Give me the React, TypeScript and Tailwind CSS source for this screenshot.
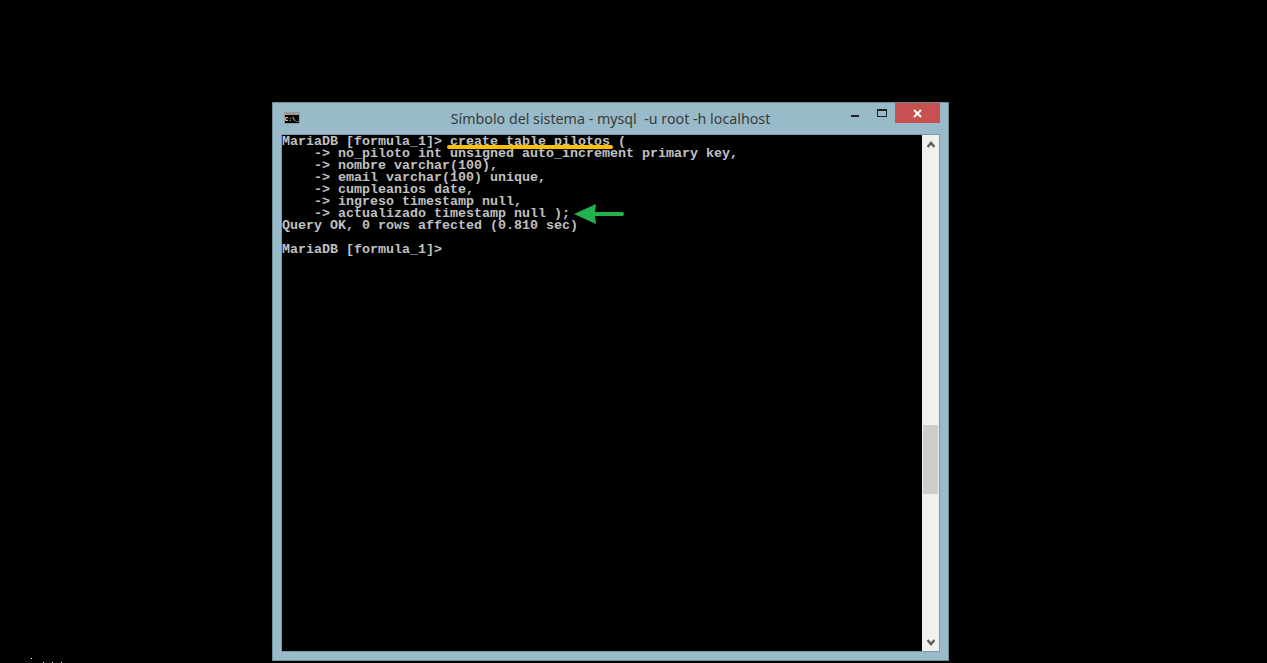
export default function App() {
  const lines = [
    "MariaDB [formula_1]> create table pilotos (",
    "    -> no_piloto int unsigned auto_increment primary key,",
    "    -> nombre varchar(100),",
    "    -> email varchar(100) unique,",
    "    -> cumpleanios date,",
    "    -> ingreso timestamp null,",
    "    -> actualizado timestamp null );",
    "Query OK, 0 rows affected (0.810 sec)",
    "",
    "MariaDB [formula_1]>",
  ];
  return (
    <div className="relative w-[1267px] h-[663px] bg-black overflow-hidden pl-[272px] pt-[102px]">
      <div className="absolute left-[31px] top-[658px] w-[1px] h-[1px] bg-white" />
      <div className="absolute left-[43px] top-[662px] w-[1px] h-[1px] bg-white" />
      <div className="absolute left-[52px] top-[662px] w-[1px] h-[1px] bg-white" />
      <div className="absolute left-[61px] top-[662px] w-[1px] h-[1px] bg-white" />
      <div className="w-[677px] h-[559px] bg-[#99bbc9] border border-[#6f8c99] flex flex-col">
        <div className="h-[31px] flex items-start shrink-0 relative">
          <div className="ml-[11px] mt-[9px] w-[16px] h-[12px] bg-black border border-[#999] border-t-[3px] flex items-center justify-center">
            <span className="font-['Liberation_Mono',monospace] text-[6px] leading-[7px] text-white font-bold whitespace-pre">C:\_</span>
          </div>
          <div className="absolute inset-x-0 top-[6px] text-center font-['Noto_Sans',sans-serif] text-[14.25px] leading-[20px] text-[#3a3a3a] whitespace-pre">
            Símbolo del sistema - mysql  -u root -h localhost
          </div>
          <div className="ml-auto flex items-start mr-[8px] relative">
            <div className="w-[8px] h-[2px] bg-[#222] mt-[12px] mr-[18px]" />
            <div className="w-[10px] h-[8px] border border-[#222] border-t-[2px] mt-[6px] mr-[8px]" />
            <div className="w-[45px] h-[20px] bg-[#c75050] flex items-center justify-center">
              <svg width="9" height="9" viewBox="0 0 9 9"><path d="M1 1 L8 8 M8 1 L1 8" stroke="#fff" strokeWidth="2" /></svg>
            </div>
          </div>
        </div>
        <div className="mx-[8px] mb-[8px] flex-1 flex border border-[#7f9aa6]">
          <div className="flex-1 bg-black pt-[0px] relative">
            <pre className="font-['Liberation_Mono',monospace] font-bold text-[13.33px] leading-[12px] text-[#c0c0c0] pt-[1px]">
              {lines.join("\n")}
            </pre>
            <div className="absolute left-[165px] top-[10px] w-[166px] h-[4px] bg-[#ffc000] rounded-full" />
            <svg className="absolute left-[291px] top-[68px]" width="52" height="22" viewBox="0 0 52 22">
              <path d="M1 11 L23 1 L22 9 L50 9 Q52 11 50 13 L22 13 L23 21 Z" fill="#22b14c" />
            </svg>
          </div>
          <div className="w-[17px] bg-[#f0f0f0] flex flex-col items-center justify-between relative">
            <svg className="mt-[6px]" width="8" height="7" viewBox="0 0 8 7"><path d="M0.5 6 L4 2 L7.5 6" fill="none" stroke="#606060" strokeWidth="2.5" /></svg>
            <div className="absolute left-[1px] top-[290px] w-[15px] h-[69px] bg-[#cdcdcd]" />
            <svg className="mb-[5px]" width="8" height="7" viewBox="0 0 8 7"><path d="M0.5 1 L4 5 L7.5 1" fill="none" stroke="#606060" strokeWidth="2.5" /></svg>
          </div>
        </div>
      </div>
    </div>
  );
}
